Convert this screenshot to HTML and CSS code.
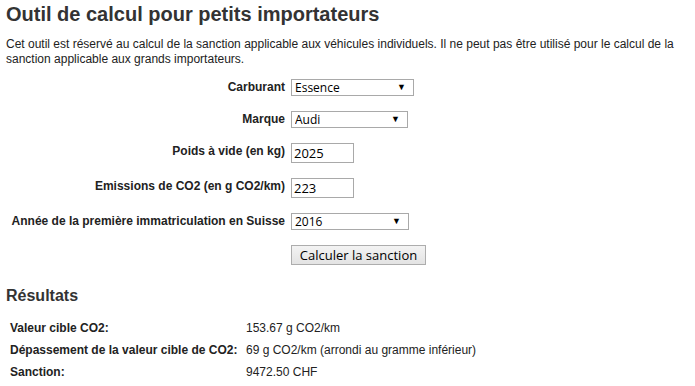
FILE: index.html
```html
<!DOCTYPE html>
<html lang="fr">
<head>
<meta charset="UTF-8" />
<meta name="viewport" content="width=device-width, initial-scale=1.0">
<title>Outil de calcul pour petits importateurs</title>
<link rel="stylesheet" href="styles.css">
</head>
<body>
  <h1>Outil de calcul pour petits importateurs</h1>
  <p class="intro">Cet outil est réservé au calcul de la sanction applicable aux véhicules individuels. Il ne peut pas être utilisé pour le calcul de la sanction applicable aux grands importateurs.</p>

  <form class="calc">
    <label for="fuel">Carburant</label>
    <div class="select w-fuel">
      <select id="fuel">
        <option selected>Essence</option>
        <option>Diesel</option>
      </select>
      <span class="arrow">▼</span>
    </div>

    <label for="brand">Marque</label>
    <div class="select w-brand">
      <select id="brand">
        <option selected>Audi</option>
        <option>BMW</option>
      </select>
      <span class="arrow">▼</span>
    </div>

    <label for="weight">Poids à vide (en kg)</label>
    <div><input id="weight" type="text" value="2025"></div>

    <label for="co2">Emissions de CO2 (en g CO2/km)</label>
    <div><input id="co2" type="text" value="223"></div>

    <label for="year">Année de la première immatriculation en Suisse</label>
    <div class="select w-year">
      <select id="year">
        <option selected>2016</option>
        <option>2015</option>
      </select>
      <span class="arrow">▼</span>
    </div>

    <span></span>
    <div><button type="button">Calculer la sanction</button></div>
  </form>

  <h2>Résultats</h2>
  <div class="results">
    <span class="key">Valeur cible CO2:</span>
    <span>153.67 g CO2/km</span>
    <span class="key">Dépassement de la valeur cible de CO2:</span>
    <span>69 g CO2/km (arrondi au gramme inférieur)</span>
    <span class="key">Sanction:</span>
    <span>9472.50 CHF</span>
  </div>
</body>
</html>
```

FILE: styles.css
```css
body {
  margin: 0;
  padding: 0 6px;
  font-family: "Liberation Sans", Arial, sans-serif;
  font-size: 12px;
  color: #222;
  background: #fff;
}
h1 {
  margin: 2px 0 0;
  font-size: 20px;
  line-height: 24px;
  color: #333;
}
.intro {
  margin: 11px 0 0;
  line-height: 15px;
}
.calc {
  display: grid;
  grid-template-columns: 279px auto;
  column-gap: 6px;
  row-gap: 15px;
  margin-top: 12px;
}
.calc label {
  text-align: right;
  font-weight: bold;
  padding-top: 1px;
  line-height: 14px;
}
.select {
  position: relative;
  height: 17px;
}
.w-fuel { width: 123px; }
.w-brand { width: 117px; }
.w-year { width: 118px; }
select {
  appearance: none;
  -webkit-appearance: none;
  width: 100%;
  height: 17px;
  margin: 0;
  padding: 0 0 0 3px;
  border: 1px solid #a9a9a9;
  border-radius: 0;
  background: #fff;
  font-family: "Open Sans", "Noto Sans", sans-serif;
  font-size: 12px;
  line-height: 15px;
  color: #000;
  box-sizing: border-box;
}
.arrow {
  position: absolute;
  right: 8px;
  top: 3px;
  font-size: 9px;
  line-height: 11px;
  color: #000;
  pointer-events: none;
}
input {
  width: 63px;
  height: 20px;
  margin: 0;
  padding: 0 2px;
  border: 1px solid #a9a9a9;
  font-family: "Open Sans", "Noto Sans", sans-serif;
  font-size: 13px;
  color: #000;
  box-sizing: border-box;
}
button {
  width: 135px;
  height: 20px;
  margin: 0;
  padding: 0;
  border: 1px solid #adadad;
  background: linear-gradient(#f3f3f3, #e3e3e3);
  font-family: "Open Sans", "Noto Sans", sans-serif;
  font-size: 13px;
  color: #000;
  cursor: pointer;
}
h2 {
  margin: 21px 0 0;
  font-size: 16px;
  line-height: 20px;
  color: #333;
}
.results {
  display: grid;
  grid-template-columns: 236px auto;
  row-gap: 8px;
  margin-top: 15px;
  padding-left: 4px;
  line-height: 14px;
}
.key {
  font-weight: bold;
}
```
